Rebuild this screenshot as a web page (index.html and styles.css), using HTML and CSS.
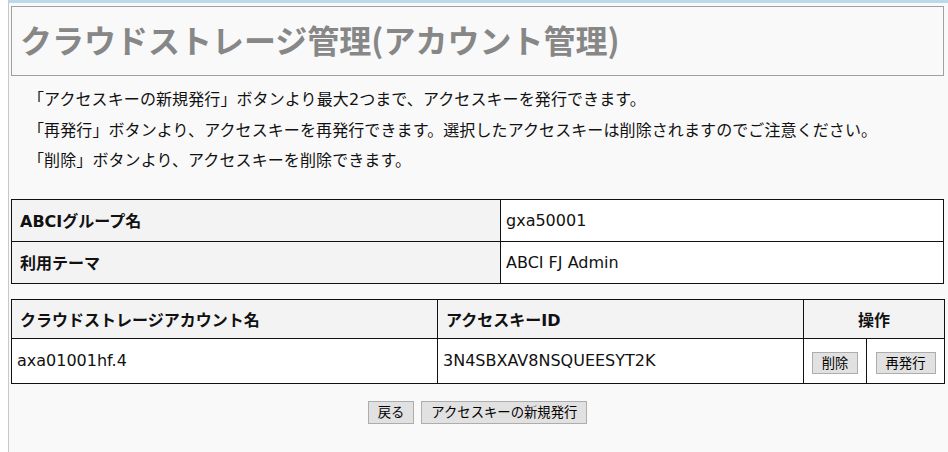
FILE: index.html
```html
<!DOCTYPE html>
<html lang="ja">
<head>
<meta charset="utf-8">
<title>クラウドストレージ管理(アカウント管理)</title>
<link rel="stylesheet" href="styles.css">
</head>
<body>
<div class="frame">
  <main class="content">
    <h1 class="page-title">クラウドストレージ管理(アカウント管理)</h1>
    <div class="notes">
      <p>「アクセスキーの新規発行」ボタンより最大2つまで、アクセスキーを発行できます。</p>
      <p>「再発行」ボタンより、アクセスキーを再発行できます。選択したアクセスキーは削除されますのでご注意ください。</p>
      <p>「削除」ボタンより、アクセスキーを削除できます。</p>
    </div>
    <table class="grid info">
      <colgroup><col class="c-label"><col></colgroup>
      <tr><th>ABCIグループ名</th><td>gxa50001</td></tr>
      <tr><th>利用テーマ</th><td>ABCI FJ Admin</td></tr>
    </table>
    <table class="grid keys">
      <colgroup><col class="c-account"><col class="c-key"><col class="c-op1"><col class="c-op2"></colgroup>
      <tr class="head"><th>クラウドストレージアカウント名</th><th>アクセスキーID</th><th colspan="2" class="center">操作</th></tr>
      <tr class="row"><td>axa01001hf.4</td><td>3N4SBXAV8NSQUEESYT2K</td><td class="center"><button class="btn small">削除</button></td><td class="center"><button class="btn small">再発行</button></td></tr>
    </table>
    <div class="actions">
      <button class="btn">戻る</button>
      <button class="btn">アクセスキーの新規発行</button>
    </div>
  </main>
</div>
</body>
</html>
```
FILE: styles.css
```css
html, body {
  margin: 0;
  height: 100%;
}
body {
  background: #ffffff;
  font-family: "DejaVu Sans", "Noto Sans CJK JP", sans-serif;
  font-size: 16px;
  color: #111;
}
.frame {
  margin-left: 8px;
  border-left: 1px solid #c8c8c8;
  border-top: 3px solid #bcd9ec;
  background: #f9f9f9;
  min-height: 100%;
  box-sizing: border-box;
}
.content {
  display: flex;
  flex-direction: column;
  padding-top: 3px;
}
.page-title {
  margin: 0 4px 0 2px;
  height: 70px;
  box-sizing: border-box;
  border: 1px solid #a0a0a0;
  display: flex;
  align-items: center;
  padding: 0 8px 5px 8px;
  font-family: "Noto Sans CJK JP", sans-serif;
  font-size: 32px;
  line-height: 1;
  font-weight: bold;
  color: #878787;
}
.notes {
  padding: 9px 0 0 19px;
}
.notes p {
  margin: 0;
  line-height: 30.5px;
  letter-spacing: 0.1px;
}
.grid {
  margin: 0 4px 0 2px;
  border-collapse: collapse;
  table-layout: fixed;
  width: calc(100% - 6px);
}
.grid th,
.grid td {
  border: 1px solid #111;
  padding: 0 5px;
  text-align: left;
  vertical-align: middle;
  background: #ffffff;
  font-weight: normal;
}
.grid th {
  background: #f3f3f3;
  font-weight: bold;
  padding: 0 8px;
}
.grid .center {
  text-align: center;
  padding: 0;
}
.info {
  margin-top: 22px;
}
.info th,
.info td {
  height: 41px;
}
.c-label { width: 489px; }
.keys {
  margin-top: 15px;
}
.keys .head th { height: 38px; }
.keys .row td { height: 44px; }
.c-account { width: 426px; }
.c-key { width: 366px; }
.c-op1 { width: 63px; }
.c-op2 { width: 78px; }
.btn {
  font-family: "Noto Sans CJK JP", sans-serif;
  font-size: 13.33px;
  line-height: 1;
  color: #000;
  background: #e1e1e1;
  border: 1px solid #adadad;
  border-radius: 0;
  padding: 0 9px;
  height: 23px;
}
.btn.small {
  height: 22px;
  margin-top: 4px;
}
.actions {
  display: flex;
  justify-content: center;
  gap: 7px;
  margin: 17px 4px 0 2px;
}
```
